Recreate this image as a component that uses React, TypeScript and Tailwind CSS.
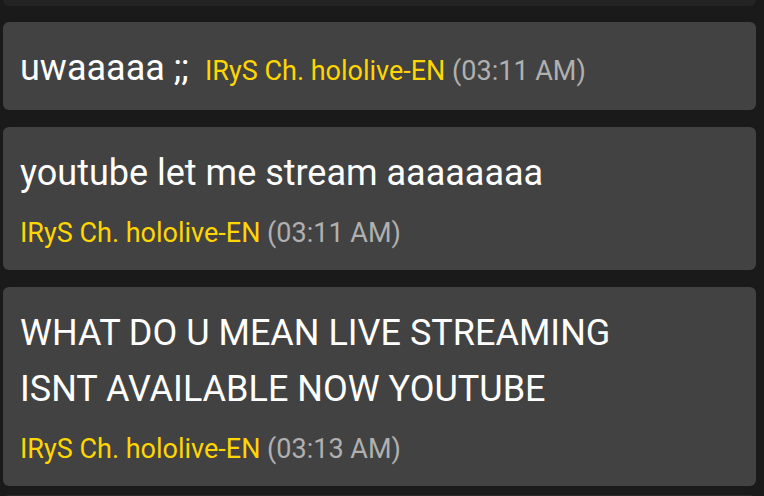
type Msg = {
  text: string;
  author: string;
  time: string;
  inline?: boolean;
};

const messages: Msg[] = [
  { text: 'uwaaaaa ;;', author: 'IRyS Ch. hololive-EN', time: '(03:11 AM)', inline: true },
  { text: 'youtube let me stream aaaaaaaa', author: 'IRyS Ch. hololive-EN', time: '(03:11 AM)' },
  {
    text: 'WHAT DO U MEAN LIVE STREAMING ISNT AVAILABLE NOW YOUTUBE',
    author: 'IRyS Ch. hololive-EN',
    time: '(03:13 AM)',
  },
];

function Meta({ author, time }: { author: string; time: string }) {
  return (
    <>
      <span className="text-[#ffd600]">{author}</span>{' '}
      <span className="text-[#b0b0b0]">{time}</span>
    </>
  );
}

export default function App() {
  return (
    <div
      className="h-[496px] w-[764px] overflow-hidden bg-[#1a1a1a] px-[3px]"
      style={{ fontFamily: 'Roboto, "Liberation Sans", sans-serif' }}
    >
      <div className="-mt-[40px] h-[46px] w-[753px] rounded-md bg-[#232323]" />
      <div className="mt-4 flex w-[753px] flex-col gap-[17px]">
        {messages.map((m, i) =>
          m.inline ? (
            <div key={i} className="rounded-md bg-[#424242] px-[17px] pt-[18px] pb-[14px]">
              <p className="text-[36px] leading-[56px] text-white">
                {m.text}
                <span className="ml-4 text-[27px] leading-none">
                  <Meta author={m.author} time={m.time} />
                </span>
              </p>
            </div>
          ) : (
            <div key={i} className="flex flex-col rounded-md bg-[#424242] px-[17px] pt-[18px] pb-[17px]">
              <p className="w-[640px] text-[36px] leading-[56px] text-white">{m.text}</p>
              <p className="mt-[12px] text-[27px] leading-[40px]">
                <Meta author={m.author} time={m.time} />
              </p>
            </div>
          )
        )}
      </div>
      <div className="mt-[9px] h-[40px] w-[753px] rounded-md bg-[#2a2a2a]" />
    </div>
  );
}
